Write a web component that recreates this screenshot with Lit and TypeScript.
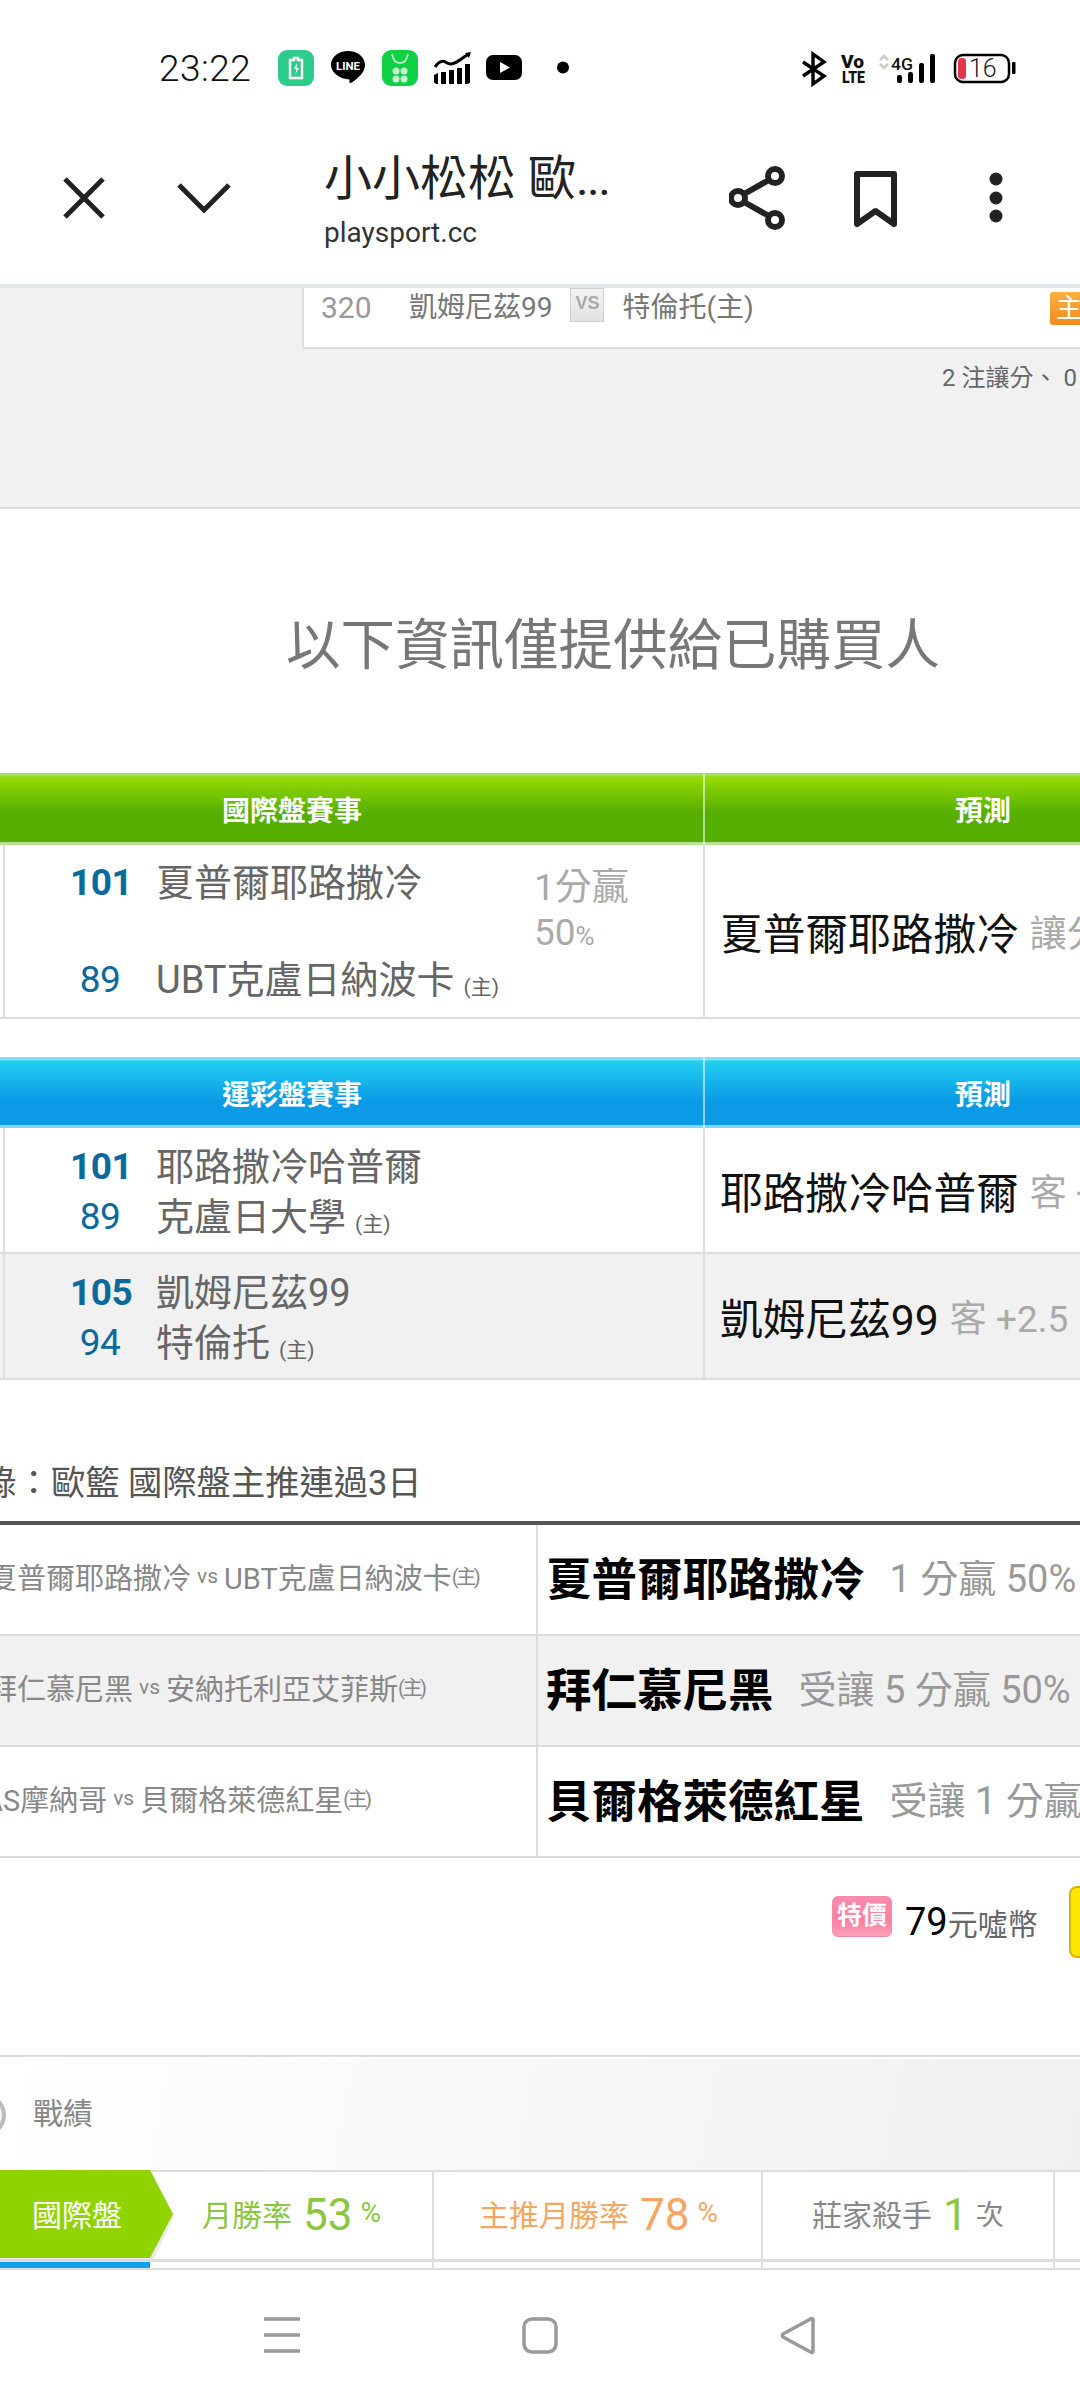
import { LitElement, html, css } from "lit";
import { customElement } from "lit/decorators.js";

const teamRows = [
  { hi: "101", lo: "89", a: "耶路撒冷哈普爾", b: "克盧日大學", pick: "耶路撒冷哈普爾", note: "客 +2.5", alt: false },
  { hi: "105", lo: "94", a: "凱姆尼茲99", b: "特倫托", pick: "凱姆尼茲99", note: "客 +2.5", alt: true },
];

const history = [
  { l: "夏普爾耶路撒冷", r: "UBT克盧日納波卡", pick: "夏普爾耶路撒冷", note: "1 分贏 50%", alt: false, off: 0 },
  { l: "拜仁慕尼黑", r: "安納托利亞艾菲斯", pick: "拜仁慕尼黑", note: "受讓 5 分贏 50%", alt: true, off: 0 },
  { l: "AS摩納哥", r: "貝爾格萊德紅星", pick: "貝爾格萊德紅星", note: "受讓 1 分贏 50%", alt: false, off: -4 },
];

@customElement("app-root")
export class AppRoot extends LitElement {
  static styles = css`
    :host {
      display: flex;
      flex-direction: column;
      width: 1080px;
      height: 2400px;
      overflow: hidden;
      background: #fff;
      font-family: Roboto, "Noto Sans CJK TC", sans-serif;
      color: #666;
    }
    * { box-sizing: border-box; }
    svg { display: block; flex: none; }

    .status { height: 136px; display: flex; align-items: center; padding: 0 64px 0 159px; flex: none; }
    .time { font-size: 37px; font-weight: 300; color: #111; width: 119px; letter-spacing: 0.5px; }
    .spacer { flex: 1; }

    .toolbar { height: 148px; display: flex; align-items: center; flex: none; padding-left: 63px; padding-bottom: 24px; }
    .title-wrap { margin-left: 93px; width: 405px; flex: none; }
    .title { font-size: 48px; line-height: 62px; color: #222; padding-top: 3px; }
    .title span { letter-spacing: -1.5px; }
    .site { font-size: 28px; line-height: 36px; color: #333; margin-top: 5px; }

    .top { height: 225px; flex: none; background: #f1f1f1; border-top: 4px solid #e3e8ec; border-bottom: 2px solid #ddd; display: flex; flex-direction: column; }
    .card { margin-left: 302px; height: 61px; background: #fff; border: 2px solid #ddd; border-top: 0; border-right: 0; display: flex; align-items: flex-start; font-size: 28px; color: #777; white-space: nowrap; width: 778px; overflow: hidden; position: relative; padding-left: 17px; line-height: 40px; flex: none; }
    .card .num { width: 88px; color: #999; font-size: 30px; }
    .vs { width: 34px; height: 34px; flex: none; background: linear-gradient(#f4f4f4, #e2e2e2); border: 1px solid #d0d0d0; color: #aaa; font-size: 18px; font-weight: 700; text-align: center; line-height: 28px; margin: 0 18px; font-family: "Liberation Sans", sans-serif; }
    .tag { position: absolute; left: 746px; top: 4px; width: 50px; height: 33px; background: linear-gradient(#fbb040, #f08a20); color: #fff; font-size: 26px; line-height: 33px; padding-left: 6px; border-radius: 3px; }
    .bets { margin: 14px 0 0 942px; font-size: 24px; line-height: 30px; white-space: pre; color: #666; }

    .notice { height: 264px; flex: none; font-size: 54.5px; color: #777; padding: 106px 0 0 286px; line-height: 60px; white-space: nowrap; }

    .table { flex: none; width: 1260px; }
    .thead { display: grid; grid-template-columns: 703px 557px; height: 72px; color: #fff; font-size: 28px; font-weight: 700; }
    .thead.short { height: 71px; }
    .thead > div { display: flex; align-items: center; }
    .thead .ha { justify-content: flex-start; padding-left: 222px; }
    .thead .hb { border-left: 2px solid rgba(255,255,255,.55); justify-content: flex-end; padding-right: 249px; }
    .green { background: linear-gradient(#a6de5c 0, #a6de5c 3px, #96dc04 4px, #56ae00 56%, #56ae00 96%, #b9e394 96%); }
    .blue { background: linear-gradient(#80e0f5 0, #80e0f5 3px, #22cff0 4px, #0a9ae6 62%, #0a9ae6 96%, #84d6f6 96%); }

    .row { display: grid; grid-template-columns: 703px 557px; border-bottom: 2px solid #ddd; }
    .row.alt { background: #f1f1f1; }
    .left { border-left: 2px solid #ddd; margin-left: 3px; display: grid; grid-template-columns: 65px 60px 26px auto; }
    .n { grid-column: 2; text-align: center; font-size: 37px; color: #0b6a9c; line-height: 50px; letter-spacing: -0.5px; }
    .n.b { font-weight: 700; }
    .t { grid-column: 4; font-size: 38px; color: #666; line-height: 50px; white-space: nowrap; }
    .t small { font-size: 21px; margin-left: 9px; line-height: 1; vertical-align: -1px; }
    .right { border-left: 2px solid #ddd; display: flex; align-items: center; padding-left: 15px; white-space: nowrap; font-size: 42.7px; color: #111; overflow: hidden; }
    .right span { color: #aaa; font-size: 37px; margin-left: 11px; }

    .t1 .left { height: 172px; grid-template-rows: 50px 1fr; padding: 13px 0 12px; grid-template-columns: 65px 60px 26px 378px auto; }
    .t1 .n.lo, .t1 .t.lo { grid-row: 2; align-self: end; height: 50px; }
    .extra { grid-column: 5; grid-row: 1 / span 2; font-size: 37px; line-height: 45px; color: #aaa; padding-top: 7px; white-space: nowrap; }
    .extra small { font-size: 26px; }
    .t2 .left { height: 124px; padding: 14px 0 10px; grid-template-rows: 50px 50px; }

    .heading { flex: none; height: 141px; padding: 83px 0 0 0; font-size: 34.3px; line-height: 40px; color: #555; margin-left: -52px; white-space: nowrap; }

    .hist { flex: none; border-top: 4px solid #555; width: 1080px; overflow: hidden; }
    .hrow { height: 111px; display: grid; grid-template-columns: 536px 544px; border-bottom: 2px solid #ddd; }
    .hrow.alt { background: #f1f1f1; }
    .hl { display: flex; align-items: center; padding: 0 0 8px 0; margin-left: -12px; font-size: 29px; color: #888; white-space: nowrap; overflow: hidden; }
    .hl i { font-style: normal; font-size: 21px; margin: 0 6px; }
    .hl small { font-size: 20px; letter-spacing: -2.5px; }
    .hr { border-left: 2px solid #ddd; padding: 0 0 8px 8px; display: flex; align-items: center; font-size: 45.5px; font-weight: 700; color: #000; white-space: nowrap; overflow: hidden; }
    .hr span { color: #999; font-size: 38px; font-weight: 400; margin-left: 25px; white-space: pre; }

    .price { flex: none; height: 197px; padding: 28px 0 0 832px; display: flex; align-items: flex-start; white-space: nowrap; }
    .badge { width: 60px; height: 41px; margin-top: 10px; flex: none; border-radius: 6px; background: linear-gradient(#f98bae, #fb7ea0 60%, #fca0bb); border: 1px solid #f08aa8; color: #fff; font-size: 25px; font-weight: 700; text-align: center; line-height: 38px; }
    .amount { margin-left: 13px; font-size: 38px; color: #000; line-height: 60px; margin-top: 6px; flex: none; }
    .amount span { font-size: 30px; color: #666; margin-left: 0; }
    .buy { margin-left: 31px; width: 60px; height: 72px; background: #ffe600; border: 2px solid #d8b400; border-radius: 8px; flex: none; }

    .perf { flex: none; height: 115px; border-top: 2px solid #ddd; padding-top: 2px; overflow: hidden; }
    .perf-inner { height: 113px; background: linear-gradient(100deg, #fff, #f0f0f0); display: flex; align-items: center; position: relative; padding: 0 0 9px 33px; font-size: 30px; color: #888; }
    .ring { position: absolute; left: -38px; top: 34px; width: 44px; height: 44px; border-radius: 50%; border: 4px solid #bbb; background: #f4f4f4; }

    .tabs { flex: none; height: 92px; border-top: 2px solid #ddd; border-bottom: 3px solid #ddd; display: grid; grid-template-columns: 150px 284px 329px 292px 25px; position: relative; white-space: nowrap; }
    .arrow { position: relative; }
    .cell { border-right: 2px solid #ddd; display: flex; align-items: center; font-size: 30px; color: #888; padding-bottom: 6px; }
    .cell b { font-weight: 400; font-size: 44px; margin: 4px 8px 0 11px; line-height: 50px; }
    .cell small { font-size: 28px; }
    .g { color: #8cc63f; }
    .o { color: #f4a662; }
    .c1 { padding-left: 52px; }
    .c2 { padding-left: 45px; }
    .c3 { padding-left: 49px; }
    .tab-label { position: absolute; left: 32px; top: 24px; font-size: 30px; line-height: 40px; color: #fff; }
    .tab-svg { position: absolute; left: 0; top: -2px; }
    .sub { flex: none; height: 8px; border-bottom: 2px solid #ddd; display: grid; grid-template-columns: 150px 284px 329px 292px 25px; }
    .sub > div { border-right: 2px solid #ddd; }
    .sub > div:first-child { background: #12a0e8; border-right: 0; }
    .sub > div:last-child { border-right: 0; }

    .nav { flex: 1; display: flex; align-items: flex-start; padding: 47px 0 0 264px; }
  `;

  private statusLeft() {
    return html`<svg width="376" height="40" viewBox="0 0 376 40">
      <rect x="0" y="2" width="36" height="36" rx="9" fill="#2ecc8a"/>
      <path d="M12 12h4v-2h4v2h4v18H12z" fill="none" stroke="#fff" stroke-width="2.4"/>
      <path d="M19 15l-3 6h2.500l-1 5 3.500-6h-2.500z" fill="#fff"/>
      <path d="M70 3c9.500 0 17 6 17 14 0 7-6 12-11 16-1.500 1-3 2-4 2-1 0-.5-2-.5-3.500C62 31 53 25 53 17c0-8 7.500-14 17-14z" fill="#000"/>
      <text x="70" y="22" text-anchor="middle" font-size="11.500" font-weight="700" fill="#fff" font-family="Roboto, sans-serif">LINE</text>
      <rect x="104" y="2" width="36" height="36" rx="9" fill="#0ed145"/>
      <path d="M114 6c1 6 4 9 8 9s7-3 8-9" fill="none" stroke="#c8f5d0" stroke-width="1.600"/>
      <g fill="#c8f5d0"><circle cx="118" cy="23" r="3.500"/><circle cx="126" cy="23" r="3.500"/><circle cx="118" cy="31" r="3.500"/><circle cx="126" cy="31" r="3.500"/></g>
      <path d="M157 19c4-6 8-7 12-4 4 2 8 1 17-6l5-3" fill="none" stroke="#000" stroke-width="3"/>
      <path d="M187 5l6-1-2 6z" fill="#000"/>
      <g fill="#000"><path d="M156 27l4-2v11c-2 0-4-.500-4-2z"/><rect x="163" y="24" width="5" height="12"/><rect x="171" y="22" width="5" height="14"/><rect x="179" y="20" width="5" height="16"/><path d="M187 16h5v18c0 1-1 2-5 2z"/></g>
      <rect x="208" y="7" width="36" height="25" rx="7" fill="#000"/>
      <path d="M222 14l10 5.500-10 5.500z" fill="#fff"/>
      <circle cx="285" cy="19.500" r="6" fill="#000"/>
    </svg>`;
  }

  private statusRight() {
    return html`<svg width="216" height="40" viewBox="0 0 216 40">
      <path d="M3 28l21-14L13 6v30l11-8L3 14" fill="none" stroke="#000" stroke-width="3.400"/>
      <text x="41" y="20" font-size="18.500" font-weight="900" fill="#111" textLength="23" lengthAdjust="spacingAndGlyphs" font-family="Roboto, sans-serif">Vo</text>
      <text x="42" y="35" font-size="17" font-weight="900" fill="#111" textLength="23" lengthAdjust="spacingAndGlyphs" font-family="Roboto, sans-serif">LTE</text>
      <path d="M80 12l4-4 4 4M80 16l4 4 4-4" fill="none" stroke="#ccc" stroke-width="2.500"/>
      <text x="91" y="22" font-size="17" font-weight="500" fill="#111" textLength="22" lengthAdjust="spacingAndGlyphs" font-family="Roboto, sans-serif">4G</text>
      <g fill="#000"><rect x="97" y="27" width="5" height="8" rx="2"/><rect x="108" y="24" width="5" height="11" rx="2"/><rect x="119" y="15" width="5" height="20" rx="2"/><rect x="130" y="6" width="5" height="29" rx="2"/></g>
      <rect x="155" y="7" width="54" height="27" rx="8" fill="none" stroke="#000" stroke-width="2.500"/>
      <rect x="158" y="10" width="8" height="21" rx="3.500" fill="#e4344a"/>
      <text x="169" y="29" font-size="25" font-weight="300" fill="#222" font-family="Roboto, sans-serif">16</text>
      <rect x="212" y="14" width="3.500" height="12" rx="1" fill="#000"/>
    </svg>`;
  }

  private toolbarLeft() {
    return html`
      <svg width="42" height="42" viewBox="0 0 42 42" fill="none" stroke="#222" stroke-width="5"><path d="M2 2l38 38M40 2L2 40"/></svg>
      <svg style="margin-left:72px" width="54" height="32" viewBox="0 0 54 32" fill="none" stroke="#222" stroke-width="5"><path d="M2 3l25 25L52 3"/></svg>
    `;
  }

  private toolbarRight() {
    return html`<svg width="290" height="64" viewBox="0 0 290 64" fill="none" stroke="#222" stroke-width="6">
      <circle cx="46" cy="10" r="7"/><circle cx="9" cy="32" r="7"/><circle cx="46" cy="54" r="7"/>
      <path d="M15 28l25-14M15 36l25 14"/>
      <path d="M128 8h37v50l-18.500-13L128 58z" stroke-linejoin="round"/>
      <g fill="#222" stroke="none"><circle cx="267" cy="13" r="6.500"/><circle cx="267" cy="32" r="6.500"/><circle cx="267" cy="50" r="6.500"/></g>
    </svg>`;
  }

  render() {
    return html`
      <div class="status">
        <div class="time">23:22</div>
        ${this.statusLeft()}
        <div class="spacer"></div>
        ${this.statusRight()}
      </div>

      <div class="toolbar">
        ${this.toolbarLeft()}
        <div class="title-wrap">
          <div class="title">小小松松 歐<span>...</span></div>
          <div class="site">playsport.cc</div>
        </div>
        ${this.toolbarRight()}
      </div>

      <div class="top">
        <div class="card">
          <div class="num">320</div>
          <div>凱姆尼茲99</div>
          <div class="vs">VS</div>
          <div>特倫托(主)</div>
          <div class="tag">主推</div>
        </div>
        <div class="bets">2 注讓分、 0 注大小</div>
      </div>

      <div class="notice">以下資訊僅提供給已購買人</div>

      <div class="table t1">
        <div class="thead green"><div class="ha">國際盤賽事</div><div class="hb">預測</div></div>
        <div class="row">
          <div class="left">
            <div class="n b">101</div><div class="t">夏普爾耶路撒冷</div>
            <div class="extra">1分贏<br/>50<small>%</small></div>
            <div class="n lo">89</div><div class="t lo">UBT克盧日納波卡<small>(主)</small></div>
          </div>
          <div class="right">夏普爾耶路撒冷<span>讓分</span></div>
        </div>
      </div>

      <div class="table t2" style="margin-top:38px">
        <div class="thead short blue"><div class="ha">運彩盤賽事</div><div class="hb">預測</div></div>
        ${teamRows.map(r => html`
          <div class="row ${r.alt ? "alt" : ""}">
            <div class="left">
              <div class="n b">${r.hi}</div><div class="t">${r.a}</div>
              <div class="n">${r.lo}</div><div class="t">${r.b}<small>(主)</small></div>
            </div>
            <div class="right">${r.pick}<span>${r.note}</span></div>
          </div>`)}
      </div>

      <div class="heading">紀錄：歐籃 國際盤主推連過3日</div>

      <div class="hist">
        ${history.map(r => html`
          <div class="hrow ${r.alt ? "alt" : ""}">
            <div class="hl"><span style="margin-left:${r.off}px">${r.l}</span><i>vs</i>${r.r}<small>(主)</small></div>
            <div class="hr">${r.pick}<span>${r.note}</span></div>
          </div>`)}
      </div>

      <div class="price">
        <div class="badge">特價</div>
        <div class="amount">79<span>元噓幣</span></div>
        <div class="buy"></div>
      </div>

      <div class="perf"><div class="perf-inner"><div class="ring"></div>戰績</div></div>

      <div class="tabs">
        <div class="arrow">
          <svg class="tab-svg" width="180" height="92" viewBox="0 0 180 92">
            <path d="M0 1h150l24 46-21 44H0z" fill="#ddd" opacity=".6"/>
            <path d="M0 0h150l23 44-23 44H0z" fill="#8fd400"/>
          </svg>
          <div class="tab-label">國際盤</div>
        </div>
        <div class="cell c1 g">月勝率<b>53</b><small>%</small></div>
        <div class="cell c2 o">主推月勝率<b>78</b><small>%</small></div>
        <div class="cell c3">莊家殺手<b class="g">1</b><small>次</small></div>
        <div></div>
      </div>
      <div class="sub"><div></div><div></div><div></div><div></div><div></div></div>

      <div class="nav">
        <svg width="552" height="38" viewBox="0 0 552 38" fill="none" stroke="#999" stroke-width="3.500">
          <path d="M0 2h36M0 18h36M0 34h36"/>
          <rect x="260" y="2" width="32" height="33" rx="8"/>
          <path d="M549 3v31c0 1.500-1.500 2-2.500 1L519 20a2 2 0 0 1 0-3L546.500 2c1-1 2.500-.5 2.500 1z" stroke-linejoin="round"/>
        </svg>
      </div>
    `;
  }
}
